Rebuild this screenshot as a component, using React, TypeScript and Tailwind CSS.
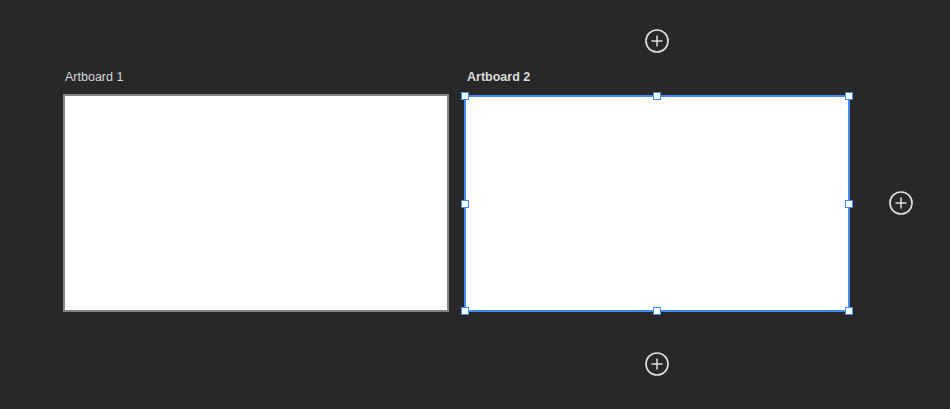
import React from "react";

function PlusButton() {
  return (
    <button className="size-6 flex items-center justify-center text-[#dcdcdc]">
      <svg viewBox="0 0 24 24" className="size-6" fill="none" stroke="currentColor">
        <circle cx="12" cy="12" r="11" strokeWidth={1.7} />
        <path d="M12 7v10M7 12h10" strokeWidth={1.5} strokeLinecap="round" />
      </svg>
    </button>
  );
}

function Handle({ className }: { className: string }) {
  return (
    <span
      className={`absolute size-[8px] bg-white border-[1.5px] border-[#3f8cf5] ${className}`}
    />
  );
}

export default function App() {
  return (
    <main
      className="w-[950px] h-[409px] bg-[#282828] overflow-hidden pl-[63px] pt-[29px]"
      style={{ fontFamily: '"Liberation Sans", Arial, sans-serif' }}
    >
      <div className="grid grid-cols-[386px_386px_24px] gap-x-[15px]">
        {/* row 1 */}
        <div />
        <div className="flex justify-center">
          <PlusButton />
        </div>
        <div />

        {/* labels */}
        <div className="mt-[16px] pl-[2px] h-4 text-[12.5px] leading-4 text-[#d6d6d6]">
          Artboard 1
        </div>
        <div className="mt-[16px] pl-[3px] h-4 text-[12.5px] leading-4 font-bold text-[#dadada]">
          Artboard 2
        </div>
        <div />

        {/* artboards */}
        <div className="mt-[9px] h-[218px] bg-white border-2 border-[#858585]" />
        <div className="mt-[10px] h-[217px] bg-white border-2 border-[#3f8cf5] relative">
          <Handle className="-left-[5px] -top-[5px]" />
          <Handle className="left-1/2 -translate-x-1/2 -top-[5px]" />
          <Handle className="-right-[5px] -top-[5px]" />
          <Handle className="-left-[5px] top-1/2 -translate-y-1/2" />
          <Handle className="-right-[5px] top-1/2 -translate-y-1/2" />
          <Handle className="-left-[5px] -bottom-[5px]" />
          <Handle className="left-1/2 -translate-x-1/2 -bottom-[5px]" />
          <Handle className="-right-[5px] -bottom-[5px]" />
        </div>
        <div className="mt-[9px] flex items-center ml-[24px] w-6">
          <PlusButton />
        </div>

        {/* row 4 */}
        <div />
        <div className="mt-[40px] flex justify-center">
          <PlusButton />
        </div>
        <div />
      </div>
    </main>
  );
}
